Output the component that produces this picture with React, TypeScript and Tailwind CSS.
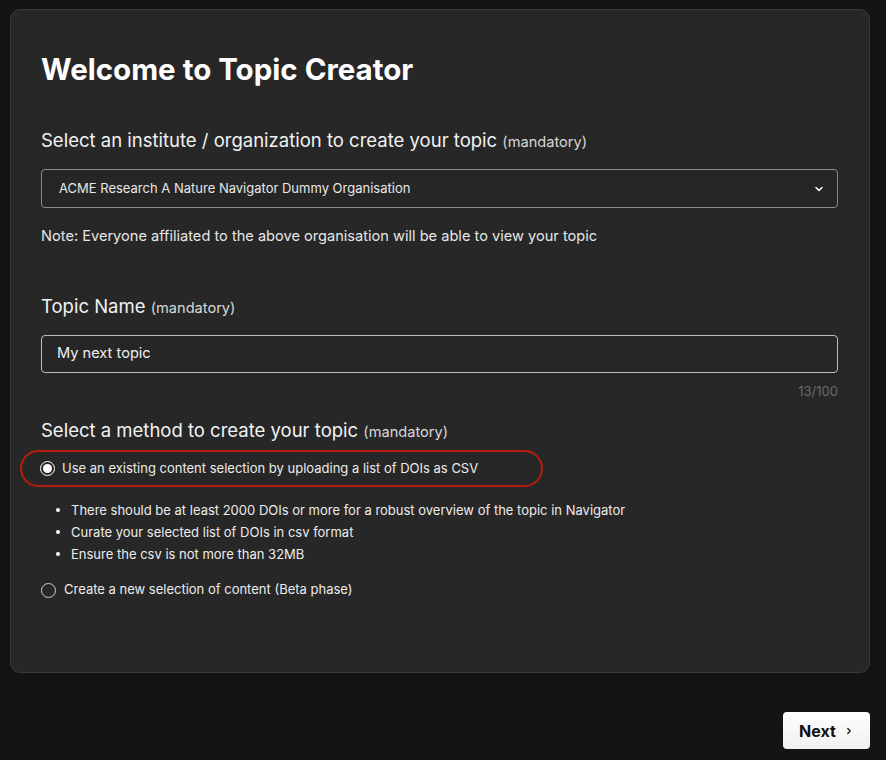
import React from "react";

export default function App() {
  return (
    <div className="min-h-[760px] bg-[#141414] pl-[10px] pr-[16px] pt-[9px] pb-[12px] text-white" style={{ fontFamily: "Inter, 'Noto Sans', sans-serif" }}>
      <div className="h-[664px] rounded-[10px] border border-[#3a3a3a] bg-[#272727] pl-[30px] pr-[31px] pt-[42px]">
        <h1 className="text-[29.5px] font-bold leading-[34px] text-white">Welcome to Topic Creator</h1>

        <div className="mt-[42px] text-[18.5px] leading-[24px] text-[#f2f2f2]">
          Select an institute / organization to create your topic{" "}
          <span className="text-[14.6px] text-[#d8d8d8]">(mandatory)</span>
        </div>
        <div className="mt-[15px] flex h-[39px] items-center justify-between rounded-[4px] border border-[#8a8a8a] bg-[#262626] pl-[17px] pr-[12px]">
          <span className="text-[13px] text-[#e8e8e8]">ACME Research A Nature Navigator Dummy Organisation</span>
          <svg width="12" height="12" viewBox="0 0 24 24" fill="none" stroke="#ffffff" strokeWidth="3" strokeLinecap="round" strokeLinejoin="round">
            <path d="M6 9l6 6 6-6" />
          </svg>
        </div>
        <div className="mt-[18px] text-[14.6px] leading-[20px] text-[#e6e6e6]">
          Note: Everyone affiliated to the above organisation will be able to view your topic
        </div>

        <div className="mt-[48px] text-[18.5px] leading-[24px] text-[#f2f2f2]">
          Topic Name <span className="text-[14.6px] text-[#d8d8d8]">(mandatory)</span>
        </div>
        <div className="mt-[15px] flex h-[38px] items-center rounded-[4px] border border-[#bdbdbd] bg-[#262626] pl-[15px]">
          <span className="text-[14.6px] text-[#f0f0f0]">My next topic</span>
        </div>
        <div className="mt-[10px] text-right text-[13px] leading-[16px] text-[#6b6b6b]">13/100</div>

        <div className="mt-[19px] text-[18.5px] leading-[24px] text-[#f2f2f2]">
          Select a method to create your topic{" "}
          <span className="text-[14.6px] text-[#d8d8d8]">(mandatory)</span>
        </div>

        <div className="ml-[-21px] mt-[6px] flex h-[37px] w-[523px] items-center rounded-full border-2 border-[#b81c0c] pl-[18px]">
          <span className="flex h-[15px] w-[15px] items-center justify-center rounded-full border-[1.5px] border-white">
            <span className="h-[9px] w-[9px] rounded-full bg-white" />
          </span>
          <span className="ml-[7px] text-[13px] text-[#ececec]">
            Use an existing content selection by uploading a list of DOIs as CSV
          </span>
        </div>

        <ul className="mt-[12px] flex flex-col text-[13px] leading-[22px] text-[#ececec]">
          <li className="flex items-center">
            <span className="ml-[15px] mr-[11px] h-[4px] w-[4px] rounded-full bg-white" />
            There should be at least 2000 DOIs or more for a robust overview of the topic in Navigator
          </li>
          <li className="flex items-center">
            <span className="ml-[15px] mr-[11px] h-[4px] w-[4px] rounded-full bg-white" />
            Curate your selected list of DOIs in csv format
          </li>
          <li className="flex items-center">
            <span className="ml-[15px] mr-[11px] h-[4px] w-[4px] rounded-full bg-white" />
            Ensure the csv is not more than 32MB
          </li>
        </ul>

        <div className="mt-[13px] flex h-[24px] items-center">
          <span className="h-[15px] w-[15px] rounded-full border-[1.5px] border-[#d0d0d0]" />
          <span className="ml-[8px] text-[13px] text-[#ececec]">Create a new selection of content (Beta phase)</span>
        </div>
      </div>

      <div className="mt-[39px] flex justify-end">
        <button className="flex h-[37px] w-[87px] items-center justify-center gap-[8px] rounded-[4px] bg-gradient-to-b from-white to-[#f0f0f0] text-[16px] font-bold text-[#111]">
          <span>Next</span>
          <svg width="10" height="10" viewBox="0 0 24 24" fill="none" stroke="#111" strokeWidth="3" strokeLinecap="round" strokeLinejoin="round">
            <path d="M9 6l6 6-6 6" />
          </svg>
        </button>
      </div>
    </div>
  );
}
